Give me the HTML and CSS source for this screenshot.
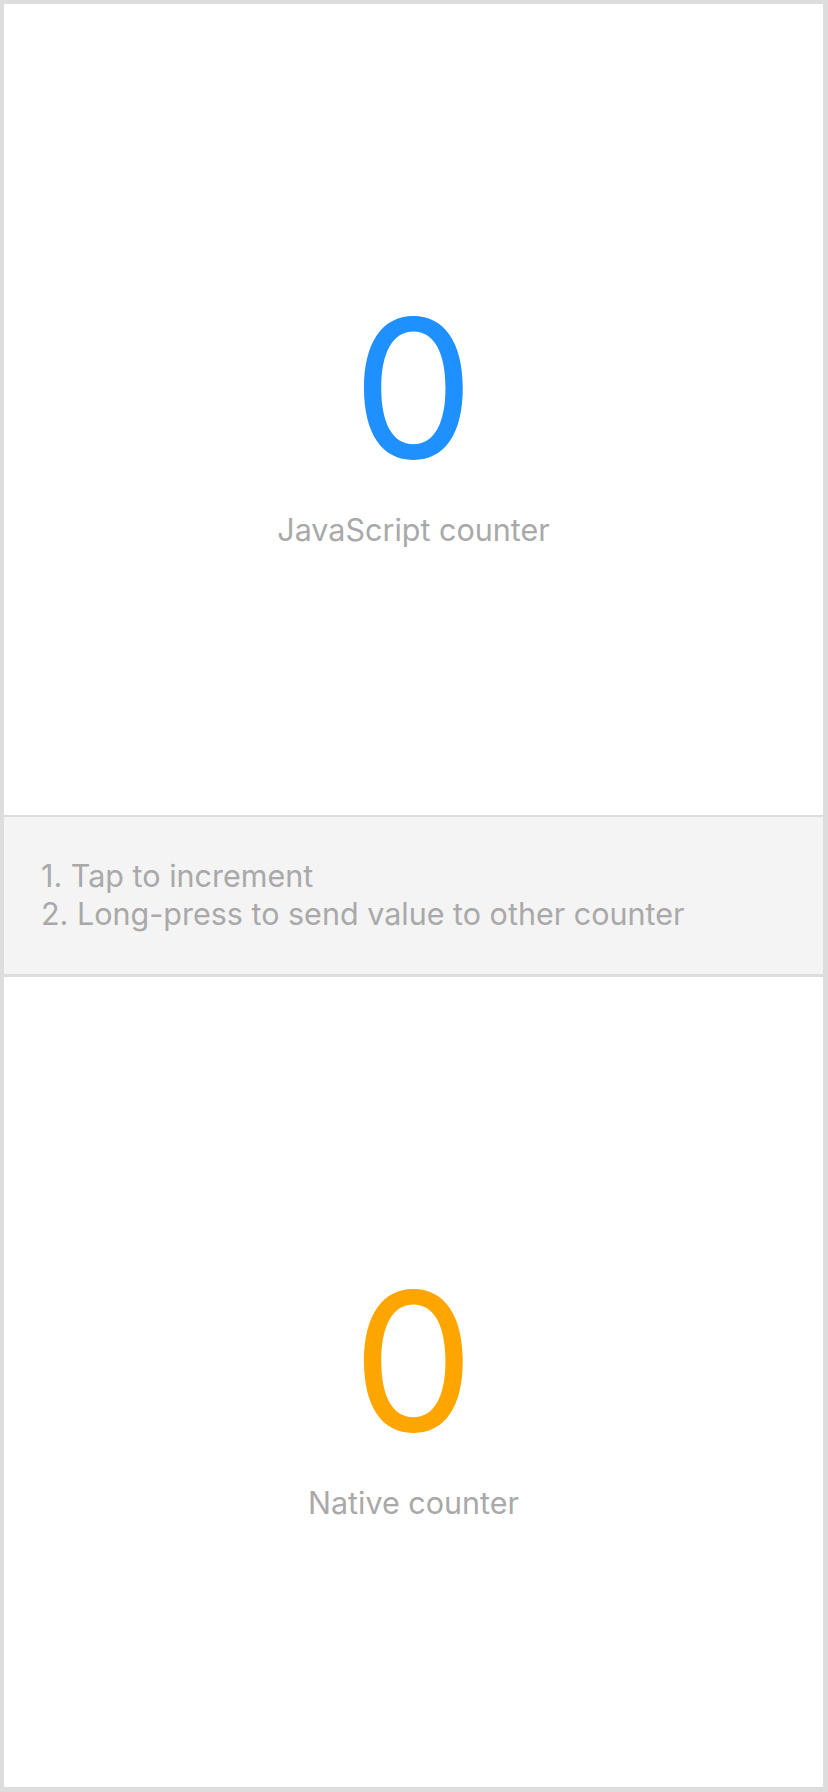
FILE: index.html
```html
<!DOCTYPE html>
<html>
<head>
<meta charset="utf-8">
<link rel="stylesheet" href="styles.css">
</head>
<body>
<div class="frame">
  <section class="panel">
    <div class="count count-js">0</div>
    <div class="label">JavaScript counter</div>
  </section>
  <section class="info">
    <div class="line">1. Tap to increment</div>
    <div class="line">2. Long-press to send value to other counter</div>
  </section>
  <section class="panel">
    <div class="count count-native">0</div>
    <div class="label">Native counter</div>
  </section>
</div>
</body>
</html>
```
FILE: styles.css
```css
html, body {
  margin: 0;
  padding: 0;
  height: 100%;
  background: #ffffff;
}
body {
  font-family: Inter, "Noto Sans", sans-serif;
}
.frame {
  box-sizing: border-box;
  height: 1792px;
  width: 828px;
  border-style: solid;
  border-color: #dddddd;
  border-width: 4px 5px 5px 4px;
  display: flex;
  flex-direction: column;
  background: #ffffff;
}
.panel {
  flex: 1;
  box-sizing: border-box;
  padding-top: 22px;
  display: flex;
  flex-direction: column;
  align-items: center;
  justify-content: center;
}
.count {
  font-size: 193px;
  line-height: 193px;
  font-weight: 400;
}
.count-js { color: #1e90ff; }
.count-native { color: #ffa500; }
.label {
  margin-top: 27px;
  font-size: 30.5px;
  line-height: 36px;
  color: #a9a9a9;
}
.info {
  height: 157px;
  box-sizing: content-box;
  border-top: 2px solid #dddddd;
  border-bottom: 3px solid #dddddd;
  background: #f4f4f4;
  display: flex;
  flex-direction: column;
  justify-content: center;
  padding: 0 37px;
}
.line {
  font-size: 30.5px;
  line-height: 38px;
  color: #a9a9a9;
}
```
